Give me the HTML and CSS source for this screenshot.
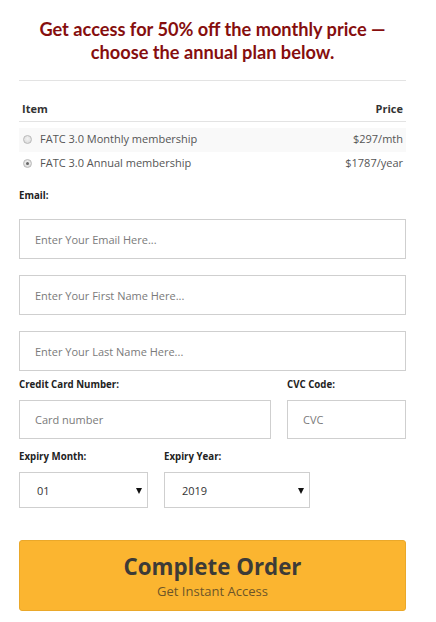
FILE: index.html
```html
<!DOCTYPE html>
<html lang="en">
<head>
<meta charset="utf-8">
<title>Order</title>
<link rel="stylesheet" href="styles.css">
</head>
<body>
<div class="page">
  <h1 class="headline">Get access for 50% off the monthly price&nbsp;—<br>choose the annual plan below.</h1>
  <hr class="sep">
  <table class="plans">
    <thead>
      <tr><th class="c-item">Item</th><th class="c-price">Price</th></tr>
    </thead>
    <tbody>
      <tr class="odd">
        <td class="c-item"><span class="radio"></span>FATC 3.0 Monthly membership</td>
        <td class="c-price">$297/mth</td>
      </tr>
      <tr>
        <td class="c-item"><span class="radio checked"></span>FATC 3.0 Annual membership</td>
        <td class="c-price">$1787/year</td>
      </tr>
    </tbody>
  </table>

  <form class="form">
    <label class="lbl lbl-email">Email:</label>
    <input class="field" type="text" placeholder="Enter Your Email Here...">
    <input class="field" type="text" placeholder="Enter Your First Name Here...">
    <input class="field field-last" type="text" placeholder="Enter Your Last Name Here...">

    <div class="row card-row">
      <div class="col col-card">
        <label class="lbl">Credit Card Number:</label>
        <input class="field" type="text" placeholder="Card number">
      </div>
      <div class="col col-cvc">
        <label class="lbl">CVC Code:</label>
        <input class="field" type="text" placeholder="CVC">
      </div>
    </div>

    <div class="row exp-row">
      <div class="col col-month">
        <label class="lbl">Expiry Month:</label>
        <div class="sel"><select><option>01</option></select></div>
      </div>
      <div class="col col-year">
        <label class="lbl">Expiry Year:</label>
        <div class="sel"><select><option>2019</option></select></div>
      </div>
    </div>

    <button type="button" class="cta">
      <span class="cta-main">Complete Order</span>
      <span class="cta-sub">Get Instant Access</span>
    </button>
  </form>
</div>
</body>
</html>
```

FILE: styles.css
```css
html, body {
  margin: 0;
  padding: 0;
  background: #fff;
}
body {
  font-family: "Open Sans", "Liberation Sans", sans-serif;
  color: #333;
}
.page {
  width: 387px;
  margin-left: 19px;
  padding-top: 18px;
}
.headline {
  font-family: Lato, "Liberation Sans", sans-serif;
  font-weight: 700;
  font-size: 18.2px;
  line-height: 23px;
  color: #860e0e;
  text-align: center;
  margin: 0;
}
.sep {
  border: 0;
  border-top: 1px solid #e3e3e3;
  margin: 16px 0 0;
  height: 0;
}
.plans {
  width: 100%;
  border-collapse: separate;
  border-spacing: 0;
  margin-top: 17px;
  font-size: 11px;
  line-height: 15px;
}
.plans th {
  font-weight: 700;
  color: #333;
  padding: 3px 3px 5px;
  border-bottom: 1px solid #e3e3e3;
}
.plans td {
  color: #555;
  padding: 3px 3px 6px;
}
.plans tbody tr:first-child td {
  border-top: 6px solid #fff;
}
.plans tr.odd td {
  background: #f9f9f9;
}
.c-item { text-align: left; }
.c-price { text-align: right; }
.plans td.c-item {
  padding-left: 4px;
}
.radio {
  display: inline-block;
  width: 7px;
  height: 7px;
  border: 1px solid #b9b9b9;
  border-radius: 50%;
  background: radial-gradient(circle at 50% 40%, #f4f4f4, #d6d6d6);
  vertical-align: -1px;
  margin-right: 8px;
  position: relative;
}
.radio.checked::after {
  content: "";
  position: absolute;
  left: 2px;
  top: 2px;
  width: 3px;
  height: 3px;
  border-radius: 50%;
  background: #666;
}
.form {
  margin-top: 14px;
  display: flex;
  flex-direction: column;
}
.lbl {
  display: block;
  font-size: 9.7px;
  font-weight: 700;
  line-height: 12px;
  color: #222;
}
.lbl-email {
  margin-bottom: 17px;
}
.field {
  display: block;
  box-sizing: border-box;
  width: 100%;
  height: 40px;
  margin: 0 0 16px;
  border: 1px solid #cfcfcf;
  border-radius: 0;
  padding: 0 15px;
  font-family: "Open Sans", "Liberation Sans", sans-serif;
  font-size: 11px;
  color: #555;
  background: #fff;
  outline: none;
}
.field::placeholder {
  color: #7a7a7a;
}
.field-last {
  margin-bottom: 8px;
}
.row {
  display: flex;
  gap: 16px;
}
.card-row .lbl { margin-bottom: 9px; }
.card-row .field { height: 39px; margin-bottom: 12px; }
.col-card { width: 252px; }
.col-cvc { width: 119px; }
.exp-row .lbl { margin-bottom: 9px; }
.col-month { width: 129px; }
.col-year { width: 146px; }
.sel {
  position: relative;
}
.sel select {
  display: block;
  width: 100%;
  box-sizing: border-box;
  height: 36px;
  border: 1px solid #cfcfcf;
  border-radius: 0;
  background: #fff;
  -webkit-appearance: none;
  appearance: none;
  padding: 0 17px;
  font-family: "Open Sans", "Liberation Sans", sans-serif;
  font-size: 11px;
  color: #333;
  outline: none;
}
.sel::after {
  content: "";
  position: absolute;
  right: 6px;
  top: 16px;
  border-left: 3px solid transparent;
  border-right: 3px solid transparent;
  border-top: 6px solid #111;
  pointer-events: none;
}
.cta {
  margin-top: 32px;
  width: 100%;
  height: 71px;
  box-sizing: border-box;
  background: #fbb530;
  border: 1px solid #eaa82a;
  border-radius: 3px;
  display: flex;
  flex-direction: column;
  align-items: center;
  justify-content: flex-start;
  padding: 13px 0 0;
  cursor: pointer;
}
.cta-main {
  display: block;
  font-family: "Open Sans", "Liberation Sans", sans-serif;
  font-weight: 700;
  font-size: 22.3px;
  line-height: 26px;
  color: #3d3b37;
}
.cta-sub {
  display: block;
  margin-top: 3px;
  font-family: "Open Sans", "Liberation Sans", sans-serif;
  font-size: 13px;
  line-height: 16px;
  color: #6d5529;
}
```
